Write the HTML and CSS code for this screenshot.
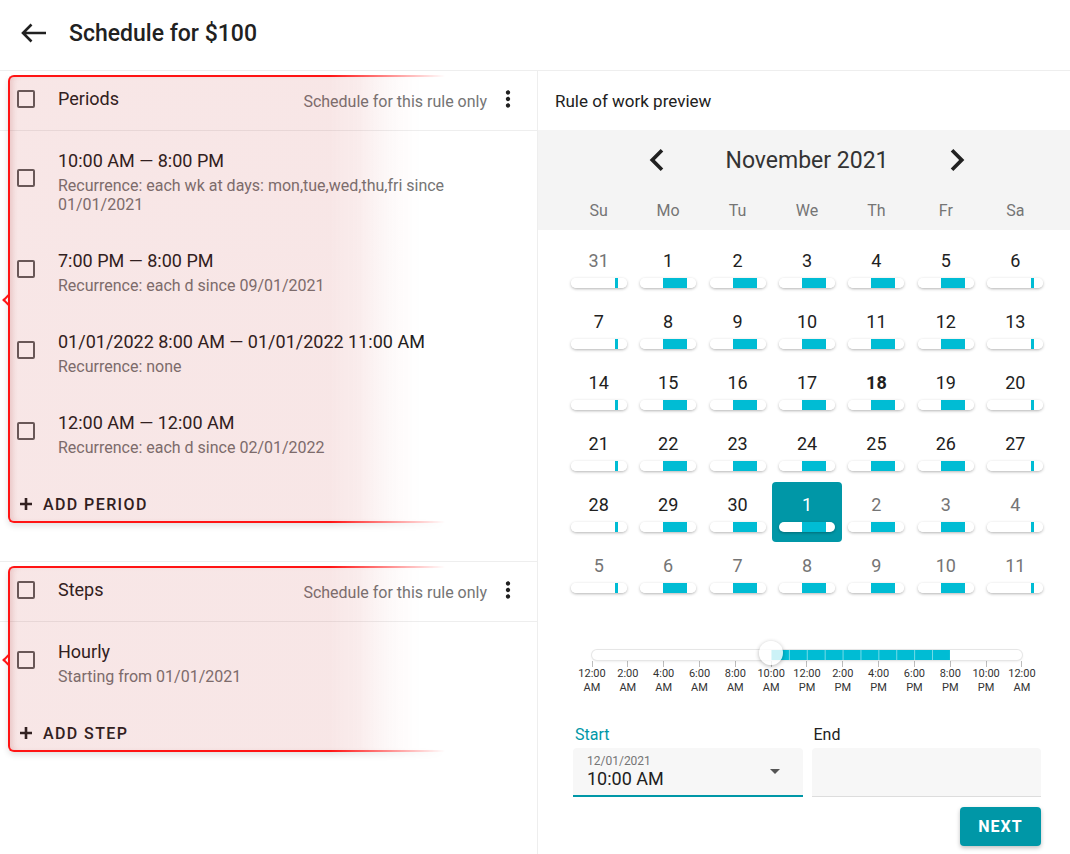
FILE: index.html
```html
<!DOCTYPE html>
<html lang="en">

<head>
    <meta charset="UTF-8">
    <title>Schedule for $100</title>
    <link rel="stylesheet" href="styles.css">
</head>

<body>
    <header class="topbar">
        <svg class="back" width="28" height="24" viewBox="0 0 28 24">
            <path d="M27 12H4 M12.5 3.5L4 12l8.5 8.5" fill="none" stroke="#212121" stroke-width="2.6" />
        </svg>
        <h1 class="page-title">Schedule for $100</h1>
    </header>

    <div class="main">
        <div class="rules">
            <!-- periods -->
            <section class="group">
                <div class="group-head">
                    <span class="box"></span>
                    <span class="head-title">Periods</span>
                    <span class="note">Schedule for this rule only</span>
                    <svg class="kebab" viewBox="0 0 24 24">
                        <path d="M12 8c1.1 0 2-.9 2-2s-.9-2-2-2-2 .9-2 2 .9 2 2 2zm0 2c-1.1 0-2 .9-2 2s.9 2 2 2 2-.9 2-2-.9-2-2-2zm0 6c-1.1 0-2 .9-2 2s.9 2 2 2 2-.9 2-2-.9-2-2-2z" />
                    </svg>
                </div>
                <ul class="items">
                    <li class="item">
                        <span class="box"></span>
                        <div class="item-text">
                            <div class="item-title">10:00 AM — 8:00 PM</div>
                            <div class="item-sub">Recurrence: each wk at days: mon,tue,wed,thu,fri since 01/01/2021</div>
                        </div>
                    </li>
                    <li class="item">
                        <span class="box"></span>
                        <div class="item-text">
                            <div class="item-title">7:00 PM — 8:00 PM</div>
                            <div class="item-sub">Recurrence: each d since 09/01/2021</div>
                        </div>
                    </li>
                    <li class="item">
                        <span class="box"></span>
                        <div class="item-text">
                            <div class="item-title">01/01/2022 8:00 AM — 01/01/2022 11:00 AM</div>
                            <div class="item-sub">Recurrence: none</div>
                        </div>
                    </li>
                    <li class="item">
                        <span class="box"></span>
                        <div class="item-text">
                            <div class="item-title">12:00 AM — 12:00 AM</div>
                            <div class="item-sub">Recurrence: each d since 02/01/2022</div>
                        </div>
                    </li>
                </ul>
                <a href="javascript:;" class="add">
                    <svg width="12" height="12" viewBox="0 0 12 12">
                        <path d="M6 0v12M0 6h12" stroke="#212121" stroke-width="2.6" />
                    </svg>
                    ADD PERIOD
                </a>
                <div class="bracket"><div class="bracket-box"></div></div>
            </section>

            <!-- steps -->
            <section class="group">
                <div class="group-head">
                    <span class="box"></span>
                    <span class="head-title">Steps</span>
                    <span class="note">Schedule for this rule only</span>
                    <svg class="kebab" viewBox="0 0 24 24">
                        <path d="M12 8c1.1 0 2-.9 2-2s-.9-2-2-2-2 .9-2 2 .9 2 2 2zm0 2c-1.1 0-2 .9-2 2s.9 2 2 2 2-.9 2-2-.9-2-2-2zm0 6c-1.1 0-2 .9-2 2s.9 2 2 2 2-.9 2-2-.9-2-2-2z" />
                    </svg>
                </div>
                <ul class="items">
                    <li class="item">
                        <span class="box"></span>
                        <div class="item-text">
                            <div class="item-title">Hourly</div>
                            <div class="item-sub">Starting from 01/01/2021</div>
                        </div>
                    </li>
                </ul>
                <a href="javascript:;" class="add">
                    <svg width="12" height="12" viewBox="0 0 12 12">
                        <path d="M6 0v12M0 6h12" stroke="#212121" stroke-width="2.6" />
                    </svg>
                    ADD STEP
                </a>
                <div class="bracket"><div class="bracket-box"></div></div>
            </section>
        </div>

        <div class="preview">
            <div class="preview-head">Rule of work preview</div>

            <div class="cal-head">
                <div class="month">
                    <svg class="nav" viewBox="0 0 24 24"><path d="M15.41 7.41L14 6l-6 6 6 6 1.41-1.41L10.83 12z" /></svg>
                    <span class="month-name">November 2021</span>
                    <svg class="nav" viewBox="0 0 24 24"><path d="M10 6L8.59 7.41 13.17 12l-4.58 4.59L10 18l6-6z" /></svg>
                </div>
                <div class="weekdays">
                    <span>Su</span><span>Mo</span><span>Tu</span><span>We</span><span>Th</span><span>Fr</span><span>Sa</span>
                </div>
            </div>

            <div class="days">
                <div class="day out"><span>31</span><i class="bar we"></i></div>
                <div class="day"><span>1</span><i class="bar wd"></i></div>
                <div class="day"><span>2</span><i class="bar wd"></i></div>
                <div class="day"><span>3</span><i class="bar wd"></i></div>
                <div class="day"><span>4</span><i class="bar wd"></i></div>
                <div class="day"><span>5</span><i class="bar wd"></i></div>
                <div class="day"><span>6</span><i class="bar we"></i></div>

                <div class="day"><span>7</span><i class="bar we"></i></div>
                <div class="day"><span>8</span><i class="bar wd"></i></div>
                <div class="day"><span>9</span><i class="bar wd"></i></div>
                <div class="day"><span>10</span><i class="bar wd"></i></div>
                <div class="day"><span>11</span><i class="bar wd"></i></div>
                <div class="day"><span>12</span><i class="bar wd"></i></div>
                <div class="day"><span>13</span><i class="bar we"></i></div>

                <div class="day"><span>14</span><i class="bar we"></i></div>
                <div class="day"><span>15</span><i class="bar wd"></i></div>
                <div class="day"><span>16</span><i class="bar wd"></i></div>
                <div class="day"><span>17</span><i class="bar wd"></i></div>
                <div class="day today"><span>18</span><i class="bar wd"></i></div>
                <div class="day"><span>19</span><i class="bar wd"></i></div>
                <div class="day"><span>20</span><i class="bar we"></i></div>

                <div class="day"><span>21</span><i class="bar we"></i></div>
                <div class="day"><span>22</span><i class="bar wd"></i></div>
                <div class="day"><span>23</span><i class="bar wd"></i></div>
                <div class="day"><span>24</span><i class="bar wd"></i></div>
                <div class="day"><span>25</span><i class="bar wd"></i></div>
                <div class="day"><span>26</span><i class="bar wd"></i></div>
                <div class="day"><span>27</span><i class="bar we"></i></div>

                <div class="day"><span>28</span><i class="bar we"></i></div>
                <div class="day"><span>29</span><i class="bar wd"></i></div>
                <div class="day"><span>30</span><i class="bar wd"></i></div>
                <div class="day sel"><span>1</span><i class="bar wd"></i></div>
                <div class="day out"><span>2</span><i class="bar wd"></i></div>
                <div class="day out"><span>3</span><i class="bar wd"></i></div>
                <div class="day out"><span>4</span><i class="bar we"></i></div>

                <div class="day out"><span>5</span><i class="bar we"></i></div>
                <div class="day out"><span>6</span><i class="bar wd"></i></div>
                <div class="day out"><span>7</span><i class="bar wd"></i></div>
                <div class="day out"><span>8</span><i class="bar wd"></i></div>
                <div class="day out"><span>9</span><i class="bar wd"></i></div>
                <div class="day out"><span>10</span><i class="bar wd"></i></div>
                <div class="day out"><span>11</span><i class="bar we"></i></div>
            </div>

            <div class="preview-body">
                <div class="slider">
                    <div class="track">
                        <div class="fill" style="left: 41.667%; width: 41.667%;"></div>
                        <div class="thumb" style="left: 41.667%;"></div>
                    </div>
                    <div class="ticks">
                        <div class="tick"><span>12:00<br>AM</span></div>
                        <div class="tick"><span>2:00<br>AM</span></div>
                        <div class="tick"><span>4:00<br>AM</span></div>
                        <div class="tick"><span>6:00<br>AM</span></div>
                        <div class="tick"><span>8:00<br>AM</span></div>
                        <div class="tick"><span>10:00<br>AM</span></div>
                        <div class="tick"><span>12:00<br>PM</span></div>
                        <div class="tick"><span>2:00<br>PM</span></div>
                        <div class="tick"><span>4:00<br>PM</span></div>
                        <div class="tick"><span>6:00<br>PM</span></div>
                        <div class="tick"><span>8:00<br>PM</span></div>
                        <div class="tick"><span>10:00<br>PM</span></div>
                        <div class="tick"><span>12:00<br>AM</span></div>
                    </div>
                </div>

                <div class="fields">
                    <div class="field">
                        <label class="field-label active">Start</label>
                        <div class="input active">
                            <div class="input-text">
                                <div class="input-date">12/01/2021</div>
                                <div class="input-value">10:00 AM</div>
                            </div>
                            <span class="caret"></span>
                        </div>
                    </div>
                    <div class="field">
                        <label class="field-label">End</label>
                        <div class="input"></div>
                    </div>
                </div>

                <div class="actions">
                    <button class="next">NEXT</button>
                </div>
            </div>
        </div>
    </div>
</body>

</html>
```

FILE: styles.css
```css
* {
    margin: 0;
    padding: 0;
    box-sizing: border-box;
}

body {
    width: 1070px;
    height: 854px;
    overflow: hidden;
    background: #ffffff;
    color: #212121;
    font-family: Roboto, "Liberation Sans", sans-serif;
}

/* top bar */
.topbar {
    height: 71px;
    display: flex;
    align-items: center;
    padding: 0 0 4px 19px;
    border-bottom: 1px solid #eeeeee;
}

.back {
    display: block;
    margin-right: 22px;
}

.page-title {
    font-size: 23px;
    font-weight: 500;
}

.main {
    display: grid;
    grid-template-columns: 537px 1fr;
    height: 783px;
}

/* left side: rules */
.group {
    position: relative;
    padding-bottom: 39px;
}

.group + .group {
    border-top: 1px solid #eeeeee;
}

.group-head {
    height: 60px;
    display: flex;
    align-items: center;
    padding: 0 16px 4px 17px;
    border-bottom: 1px solid #eeeeee;
}

.box {
    flex: none;
    width: 18px;
    height: 18px;
    border: 2px solid #5f5f5f;
    border-radius: 2px;
    margin-right: 23px;
}

.head-title {
    flex: 1;
    font-size: 18px;
    line-height: 24px;
}

.note {
    font-size: 16px;
    color: #757575;
    margin-top: 5px;
}

.kebab {
    width: 26px;
    height: 26px;
    margin-left: 8px;
    fill: #212121;
}

.items {
    list-style: none;
}

.item {
    display: flex;
    align-items: center;
    padding: 18px 40px 17px 17px;
}

.item .box {
    margin-bottom: 7px;
}

.item-title {
    font-size: 18px;
    line-height: 24px;
    margin-bottom: 3px;
}

.item-sub {
    font-size: 16px;
    line-height: 19px;
    color: #757575;
}

.add {
    display: flex;
    align-items: center;
    height: 36px;
    margin: 12px 0 0 20px;
    color: #212121;
    text-decoration: none;
    font-size: 16px;
    font-weight: 500;
    letter-spacing: 1.4px;
}

.add svg {
    margin-right: 11px;
}

/* red highlight over a group */
.bracket {
    position: absolute;
    left: 0;
    top: 4px;
    bottom: 28px;
    width: 450px;
    padding: 0 0 10px 8px;
    pointer-events: none;
    -webkit-mask-image: linear-gradient(to right, #000 330px, transparent 445px);
    mask-image: linear-gradient(to right, #000 330px, transparent 445px);
}

.bracket-box {
    position: relative;
    height: 100%;
    border: 2px solid #ff1414;
    border-right: none;
    border-radius: 6px 0 0 6px;
    background: linear-gradient(to right, rgba(190, 30, 30, 0.11) 350px, rgba(190, 30, 30, 0) 415px);
    box-shadow: 0 3px 6px rgba(0, 0, 0, 0.12), inset 5px 0 6px -3px rgba(150, 0, 0, 0.16);
}

.bracket-box::before {
    content: '';
    position: absolute;
    left: -6px;
    top: 50%;
    width: 6px;
    height: 6px;
    margin-top: -3px;
    border-left: 2px solid #ff1414;
    border-bottom: 2px solid #ff1414;
    transform: rotate(45deg);
}

/* right side: preview */
.preview {
    border-left: 1px solid #eeeeee;
}

.preview-head {
    height: 59px;
    display: flex;
    align-items: center;
    padding-left: 17px;
    font-size: 17px;
}

.cal-head {
    background: #f4f4f4;
    padding: 0 20px 0 26px;
}

.month {
    height: 60px;
    display: flex;
    justify-content: center;
    align-items: center;
}

.nav {
    width: 44px;
    height: 44px;
    fill: #212121;
}

.month-name {
    width: 256px;
    text-align: center;
    font-size: 23px;
    color: #333333;
}

.weekdays {
    height: 40px;
    display: grid;
    grid-template-columns: repeat(7, 1fr);
    align-items: center;
    text-align: center;
    font-size: 16px;
    color: #757575;
}

.days {
    display: grid;
    grid-template-columns: repeat(7, 1fr);
    grid-auto-rows: 61px;
    padding: 8px 20px 0 26px;
}

.day {
    height: 60px;
    display: flex;
    flex-direction: column;
    align-items: center;
    padding-top: 11px;
    border-radius: 4px;
    font-size: 18px;
    line-height: 24px;
}

.day.out {
    color: #757575;
}

.day.today {
    font-weight: 700;
}

.day.sel {
    background: #0097a7;
    color: #ffffff;
}

.bar {
    display: block;
    width: 56px;
    height: 10px;
    margin-top: 5px;
    border-radius: 5px;
    background: #ffffff;
    box-shadow: 0 1px 3px rgba(0, 0, 0, 0.3);
}

.bar.wd {
    background: linear-gradient(to right, #fff 41.67%, #00bcd4 41.67%, #00bcd4 83.33%, #fff 83.33%);
}

.bar.we {
    background: linear-gradient(to right, #fff 79.17%, #00bcd4 79.17%, #00bcd4 83.33%, #fff 83.33%);
}

.preview-body {
    padding: 0 20px 0 26px;
}

/* time slider */
.slider {
    width: 430px;
    margin: 46px auto 0;
}

.track {
    position: relative;
    height: 10px;
    border-radius: 5px;
    background: #ffffff;
    box-shadow: 0 0 0 1px #e6e6e6, 0 1px 3px rgba(0, 0, 0, 0.12);
}

.fill {
    position: absolute;
    top: 0;
    bottom: 0;
    background-color: #00bcd4;
    background-image: linear-gradient(to right, rgba(255, 255, 255, 0.45) 1px, transparent 1px);
    background-size: 10% 100%;
}

.thumb {
    position: absolute;
    top: 50%;
    width: 24px;
    height: 24px;
    margin: -14px 0 0 -12px;
    border-radius: 50%;
    background: rgba(255, 255, 255, 0.8);
    box-shadow: 0 1px 4px rgba(0, 0, 0, 0.3);
}

.ticks {
    display: flex;
    justify-content: space-between;
    margin-top: 1px;
}

.tick {
    width: 0;
    display: flex;
    flex-direction: column;
    align-items: center;
}

.tick::before {
    content: '';
    width: 1px;
    height: 6px;
    background: #bdbdbd;
}

.tick span {
    white-space: nowrap;
    text-align: center;
    font-size: 11px;
    line-height: 14px;
    color: #333333;
}

/* start / end inputs */
.fields {
    width: 468px;
    margin: 30px auto 0;
    display: grid;
    grid-template-columns: 1fr 1fr;
    column-gap: 9px;
}

.field-label {
    display: block;
    padding-left: 2px;
    margin-bottom: 3px;
    font-size: 16px;
    line-height: 20px;
}

.field-label.active {
    color: #0097a7;
}

.input {
    height: 49px;
    display: flex;
    align-items: center;
    padding: 0 23px 0 14px;
    background: #f7f7f7;
    border-radius: 4px 4px 0 0;
    border-bottom: 1px solid #dddddd;
}

.input.active {
    border-bottom: 2px solid #0097a7;
}

.input-text {
    flex: 1;
}

.input-date {
    font-size: 12px;
    line-height: 14px;
    color: #757575;
}

.input-value {
    font-size: 18px;
    line-height: 22px;
}

.caret {
    width: 0;
    height: 0;
    border-left: 5px solid transparent;
    border-right: 5px solid transparent;
    border-top: 5px solid #555555;
}

.actions {
    width: 468px;
    margin: 10px auto 0;
    display: flex;
    justify-content: flex-end;
}

.next {
    width: 81px;
    height: 39px;
    border: none;
    border-radius: 4px;
    background: #0097a7;
    color: #ffffff;
    font-family: Roboto, "Liberation Sans", sans-serif;
    font-size: 16px;
    font-weight: 700;
    letter-spacing: 1px;
    box-shadow: 0 2px 4px rgba(0, 0, 0, 0.25);
}
```
